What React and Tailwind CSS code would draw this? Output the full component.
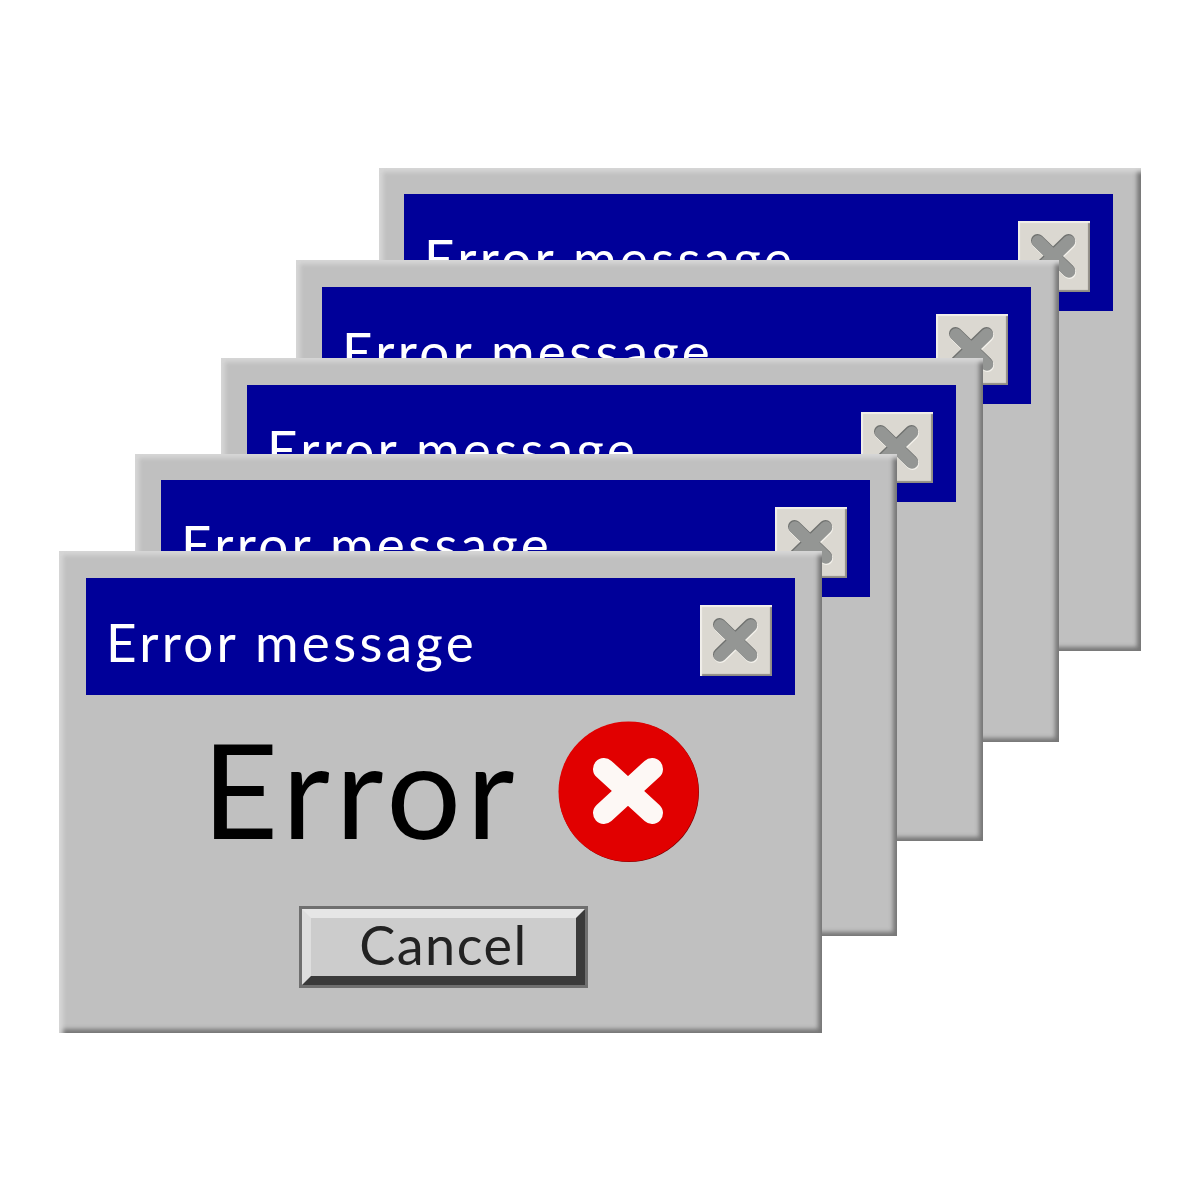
const WINDOWS = [
  { id: 'w4', className: 'left-[379px] top-[168px] h-[483px] w-[762px] pt-[26px] pl-[25px] pr-[28px]' },
  { id: 'w3', className: 'left-[296px] top-[260px] h-[482px] w-[763px] pt-[27px] pl-[26px] pr-[28px]' },
  { id: 'w2', className: 'left-[221px] top-[358px] h-[483px] w-[762px] pt-[27px] pl-[26px] pr-[27px]' },
  { id: 'w1', className: 'left-[135px] top-[454px] h-[482px] w-[762px] pt-[26px] pl-[26px] pr-[27px]' },
];

function CloseButton() {
  return (
    <div className="mt-[27px] flex h-[71px] w-[72px] items-center justify-center bg-[#dbd8d1] shadow-[inset_2px_2px_1px_#f1efea,inset_-2px_-2px_1px_#8f8c84]">
      <svg width="50" height="50" viewBox="0 0 50 50" fill="none" strokeLinecap="round">
        <path d="M9.500 10.500 40.500 40.500M40.500 10.500 9.500 40.500" stroke="#f4f2ec" strokeWidth="13" />
        <path d="M8.500 8.500 39.500 38.500M39.500 8.500 8.500 38.500" stroke="#6f716f" strokeWidth="13" />
        <path d="M9 9.500 40 39.500M40 9.500 9 39.500" stroke="#949694" strokeWidth="12.500" />
      </svg>
    </div>
  );
}

function ErrorIcon() {
  return (
    <svg width="142" height="142" viewBox="0 0 142 142">
      <circle cx="71" cy="71" r="70" fill="#7a0000" />
      <circle cx="70.500" cy="70.500" r="70" fill="#e10000" />
      <path d="M46 48 94 92M94 48 46 92" stroke="#fdf8f5" strokeWidth="22" strokeLinecap="round" />
    </svg>
  );
}

function Dialog({ className, children }) {
  return (
    <div className={`absolute bg-[#c0c0c0] shadow-[inset_7px_7px_4px_-3px_#d6d6d6,inset_-7px_-7px_4px_-3px_#777777] ${className}`}>
      <div className="flex h-[117px] items-start justify-between bg-[#000099] pl-[20px] pr-[23px]">
        <span className="pt-[37px] text-[53px] leading-none tracking-[3.300px] text-white">Error message</span>
        <CloseButton />
      </div>
      {children}
    </div>
  );
}

export default function App() {
  return (
    <div className="relative h-[1200px] w-[1200px] overflow-hidden bg-white font-['Lato',sans-serif]">
      {WINDOWS.map((win) => (
        <Dialog key={win.id} className={win.className} />
      ))}

      {/* Front window */}
      <Dialog className="left-[59px] top-[551px] h-[482px] w-[763px] p-[27px]">
        <div className="mt-[26px] flex items-start pl-[116px]">
          <span className="text-[132px] leading-[134px] tracking-[5.500px] text-black">Error</span>
          <div className="ml-[38px]">
            <ErrorIcon />
          </div>
        </div>
        <div className="mt-[43px] flex justify-center">
          <button className="ml-[6px] h-[82px] w-[289px] border-[3px] border-[#6f6f6f]">
            <span className="flex h-full w-full items-center justify-center border-[9px] border-t-[#e6e6e6] border-r-[#3a3a3a] border-b-[#3a3a3a] border-l-[#dedede] bg-[#cccccc] pb-[5px] text-[54px] tracking-[1.500px] text-[#222222]">
              Cancel
            </span>
          </button>
        </div>
      </Dialog>
    </div>
  );
}
